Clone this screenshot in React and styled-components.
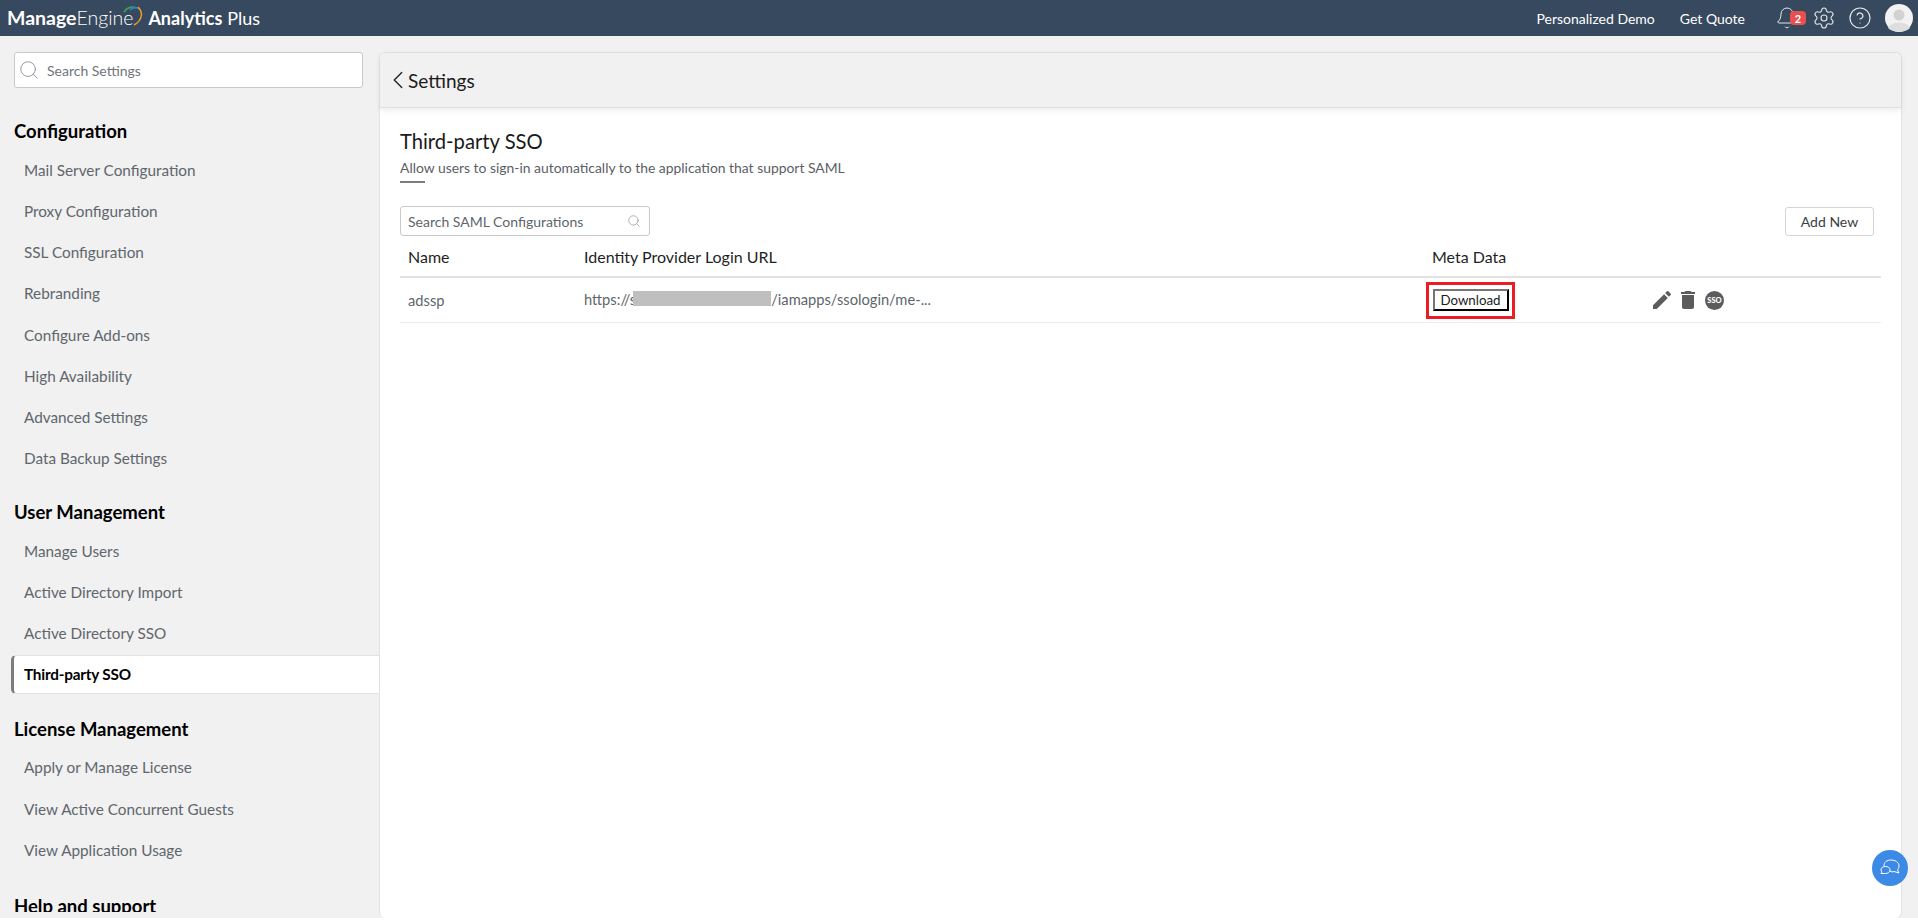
import React from "react";
import styled, { createGlobalStyle } from "styled-components";
import { Bell, Settings, CircleHelp, Search, ChevronLeft } from "lucide-react";
import { MdEdit, MdDelete } from "react-icons/md";

const GlobalStyle = createGlobalStyle`
  html, body {
    margin: 0;
    height: 100%;
    overflow: hidden;
    background: #fff;
    font-family: Lato, "Open Sans", sans-serif;
  }
  * { box-sizing: border-box; }
`;

const Page = styled.div`
  width: 1918px;
  height: 920px;
  display: flex;
  flex-direction: column;
  overflow: hidden;
`;

const Header = styled.header`
  height: 36px;
  flex: none;
  display: flex;
  align-items: center;
  background: #37495e;
  color: #fff;
  padding: 0 5px 0 7px;
`;

const Logo = styled.div`
  display: flex;
  align-items: center;
  font-size: 19.5px;
  line-height: 36px;
`;

const LogoBold = styled.span`
  font-weight: 700;
`;

const LogoLight = styled.span`
  font-weight: 300;
`;

const LogoMark = styled.svg`
  width: 24px;
  height: 24px;
  margin: -2px 0 0 -12px;
`;

const LogoProduct = styled.span`
  margin-left: 3px;
  font-weight: 700;
  font-size: 18px;
`;

const LogoPlus = styled.span`
  margin-left: 5px;
  font-weight: 400;
  font-size: 18px;
`;

const HeaderRight = styled.div`
  margin-left: auto;
  display: flex;
  align-items: center;
`;

const HeaderLink = styled.span`
  font-size: 14px;
  margin-right: ${(p) => p.$gap}px;
`;

const IconSlot = styled.span`
  position: relative;
  display: flex;
  margin-right: ${(p) => p.$gap}px;
  color: #e4e7ea;
`;

const Badge = styled.span`
  position: absolute;
  left: 15px;
  top: 5px;
  width: 16px;
  height: 14px;
  border-radius: 4px;
  background: #e8504f;
  color: #fff;
  font-size: 11px;
  font-weight: 700;
  line-height: 15px;
  text-align: center;
`;

const Avatar = styled.svg`
  width: 28px;
  height: 28px;
  display: block;
`;

const Body = styled.div`
  height: 882px;
  flex: none;
  display: flex;
  background: #f1f1f1;
  padding: 16px 16px 0 0;
`;

const Sidebar = styled.aside`
  width: 379px;
  flex: none;
  height: 860px;
  overflow: hidden;
`;

const SearchBox = styled.div`
  margin-left: 14px;
  width: 349px;
  height: 36px;
  display: flex;
  align-items: center;
  gap: 7px;
  padding-left: 3px;
  background: #fff;
  border: 1px solid #c9c9c9;
  border-radius: 3px;
  font-size: 14px;
  color: #70757a;
  svg { color: #8f8f8f; }
`;

const GroupTitle = styled.h3`
  margin: ${(p) => p.$top}px 0 6px 14px;
  font-size: 18.5px;
  line-height: 24px;
  font-weight: 700;
  color: #000;
`;

const MenuItem = styled.div`
  height: 41.25px;
  display: flex;
  align-items: center;
  padding-left: 24px;
  font-size: 15.3px;
  color: #60666c;
`;

const ActiveItem = styled(MenuItem)`
  height: 39px;
  margin: 1px 0 1px 11px;
  padding-left: 10px;
  background: #fff;
  color: #000;
  font-weight: 700;
  letter-spacing: -0.2px;
  border: 1px solid #e2e2e2;
  border-right: 0;
  border-left: 3px solid #7d7d7d;
  border-radius: 5px 0 0 5px;
`;

const Panel = styled.main`
  position: relative;
  flex: 1;
  display: flex;
  flex-direction: column;
  height: 866px;
  background: #fff;
  border: 1px solid #e2e2e2;
  border-bottom: 0;
  border-radius: 6px;
`;

const PanelBar = styled.div`
  height: 55px;
  flex: none;
  display: flex;
  align-items: center;
  padding-left: 3px;
  background: #f1f1f1;
  border-bottom: 1px solid #e0e0e0;
  border-radius: 6px 6px 0 0;
  box-shadow: 0 2px 6px rgba(0, 0, 0, 0.08);
  font-size: 19px;
  color: #1c1c1c;
  svg { margin-right: -5px; }
`;

const Content = styled.div`
  padding: 19px 20px 0;
`;

const Title = styled.h1`
  margin: 0;
  font-size: 20.2px;
  line-height: 28px;
  font-weight: 400;
  color: #1a1a1a;
`;

const Subtitle = styled.p`
  margin: 3px 0 0;
  font-size: 13.9px;
  line-height: 20px;
  color: #5b6066;
`;

const TitleRule = styled.div`
  width: 25px;
  height: 2px;
  margin-top: 3px;
  background: #7d7d7d;
`;

const Toolbar = styled.div`
  margin-top: 23px;
  padding-right: 7px;
  display: flex;
  justify-content: space-between;
  align-items: center;
`;

const TableSearch = styled.div`
  width: 250px;
  height: 30px;
  display: flex;
  align-items: center;
  justify-content: space-between;
  padding: 0 8px 0 7px;
  border: 1px solid #c9c9c9;
  border-radius: 3px;
  font-size: 14px;
  color: #60666c;
  svg { color: #8f8f8f; }
`;

const AddButton = styled.button`
  width: 89px;
  height: 29px;
  padding: 0;
  background: #fff;
  border: 1px solid #d4d4d4;
  border-radius: 3px;
  font-family: inherit;
  font-size: 14px;
  color: #3c4043;
`;

const Row = styled.div`
  display: grid;
  grid-template-columns: 176px 848px 218px 1fr;
  align-items: center;
  padding-left: 8px;
`;

const HeadRow = styled(Row)`
  height: 42px;
  border-bottom: 2px solid #e2e2e2;
  font-size: 16px;
  color: #1f1f1f;
  padding-top: 1px;
`;

const DataRow = styled(Row)`
  height: 45px;
  border-bottom: 1px solid #ececec;
  font-size: 14.7px;
  color: #60666c;
`;

const UrlCell = styled.div`
  display: flex;
  align-items: center;
  white-space: pre;
  margin-top: -3px;
`;

const Redacted = styled.span`
  display: block;
  width: 138px;
  height: 15px;
  margin-left: -3px;
  background: #bfbfbf;
`;

const Annotation = styled.div`
  width: 89px;
  height: 37px;
  margin-left: -6px;
  display: flex;
  align-items: center;
  justify-content: center;
  border: 3px solid #ed1c24;
`;

const DownloadButton = styled.button`
  width: 76px;
  height: 22px;
  padding: 0;
  background: #fff;
  border: 2px solid;
  border-color: #767676 #000 #000 #767676;
  font-family: inherit;
  font-size: 13.3px;
  color: #1a1a1a;
`;

const Actions = styled.div`
  display: flex;
  align-items: center;
  color: #5c5c5c;
`;

const SsoIcon = styled.span`
  width: 19px;
  height: 19px;
  margin-left: 5px;
  border-radius: 50%;
  background: #5c5c5c;
  color: #fff;
  font-size: 7.5px;
  font-weight: 900;
  line-height: 19px;
  text-align: center;
`;

const ChatButton = styled.div`
  position: absolute;
  right: -7px;
  bottom: 32px;
  width: 36px;
  height: 36px;
  display: flex;
  align-items: center;
  justify-content: center;
  border-radius: 50%;
  background: #3d8ae6;
`;

const menu = [
  { title: "Configuration", top: 31, items: ["Mail Server Configuration", "Proxy Configuration", "SSL Configuration", "Rebranding", "Configure Add-ons", "High Availability", "Advanced Settings", "Data Backup Settings"] },
  { title: "User Management", top: 21, items: ["Manage Users", "Active Directory Import", "Active Directory SSO", "Third-party SSO"] },
  { title: "License Management", top: 23, items: ["Apply or Manage License", "View Active Concurrent Guests", "View Application Usage"] },
  { title: "Help and support", top: 23, items: [] },
];

const App = () => {
  return (
    <Page>
      <GlobalStyle />
      <Header>
        <Logo>
          <LogoBold>Manage</LogoBold>
          <LogoLight>Engine</LogoLight>
          <LogoMark viewBox="0 0 24 24" fill="none" strokeWidth="1.6">
            <path d="M3 7 C6 2 12 1 15 3" stroke="#3f9e5a" />
            <path d="M9 5 C12 2 16 2 18 4" stroke="#2f7fc4" />
            <path d="M17 2 C22 7 22 15 13 20" stroke="#e39a2e" />
          </LogoMark>
          <LogoProduct>Analytics</LogoProduct>
          <LogoPlus>Plus</LogoPlus>
        </Logo>
        <HeaderRight>
          <HeaderLink $gap={25}>Personalized Demo</HeaderLink>
          <HeaderLink $gap={30}>Get Quote</HeaderLink>
          <IconSlot $gap={13}>
            <Bell size={24} strokeWidth={1} />
            <Badge>2</Badge>
          </IconSlot>
          <IconSlot $gap={12}>
            <Settings size={24} strokeWidth={1.1} />
          </IconSlot>
          <IconSlot $gap={13}>
            <CircleHelp size={24} strokeWidth={1.2} />
          </IconSlot>
          <Avatar viewBox="0 0 28 28">
            <circle cx="14" cy="14" r="14" fill="#f2f2f2" />
            <circle cx="14" cy="11" r="5.5" fill="#d2d2d2" />
            <path d="M3 24 C5 17 23 17 25 24 C20 29 8 29 3 24 Z" fill="#dedede" />
          </Avatar>
        </HeaderRight>
      </Header>
      <Body>
        <Sidebar>
          <SearchBox>
            <Search size={22} strokeWidth={1} />
            Search Settings
          </SearchBox>
          {menu.map((group) => (
            <div key={group.title}>
              <GroupTitle $top={group.top}>{group.title}</GroupTitle>
              {group.items.map((item) =>
                item === "Third-party SSO" ? (
                  <ActiveItem key={item}>{item}</ActiveItem>
                ) : (
                  <MenuItem key={item}>{item}</MenuItem>
                )
              )}
            </div>
          ))}
        </Sidebar>
        <Panel>
          <PanelBar>
            <ChevronLeft size={30} strokeWidth={1} />
            Settings
          </PanelBar>
          <Content>
            <Title>Third-party SSO</Title>
            <Subtitle>Allow users to sign-in automatically to the application that support SAML</Subtitle>
            <TitleRule />
            <Toolbar>
              <TableSearch>
                Search SAML Configurations
                <Search size={14} strokeWidth={1.2} />
              </TableSearch>
              <AddButton>Add New</AddButton>
            </Toolbar>
            <HeadRow>
              <span>Name</span>
              <span>Identity Provider Login URL</span>
              <span>Meta Data</span>
              <span />
            </HeadRow>
            <DataRow>
              <span>adssp</span>
              <UrlCell>
                https://s
                <Redacted />
                /iamapps/ssologin/me-...
              </UrlCell>
              <Annotation>
                <DownloadButton>Download</DownloadButton>
              </Annotation>
              <Actions>
                <MdEdit size={24} />
                <MdDelete size={24} style={{ marginLeft: 2 }} />
                <SsoIcon>SSO</SsoIcon>
              </Actions>
            </DataRow>
          </Content>
          <ChatButton>
            <svg width="22" height="20" viewBox="0 0 22 20" fill="none" stroke="#fff" strokeWidth="1">
              <path d="M5 8 C5 4 8 2 12 2 C16 2 20 4 20 8 C20 10 19 11 18.5 12 L20 15 L15 13.5 C14 14 12 14 11 13" />
              <path d="M2 12 C2 9.5 4 8.5 6.5 8.5 C9 8.5 11 9.5 11 12 C11 14 9 15.5 6.5 15.5 L2 15.5 L3 14 C2.3 13.5 2 13 2 12 Z" />
            </svg>
          </ChatButton>
        </Panel>
      </Body>
    </Page>
  );
};

export default App;
